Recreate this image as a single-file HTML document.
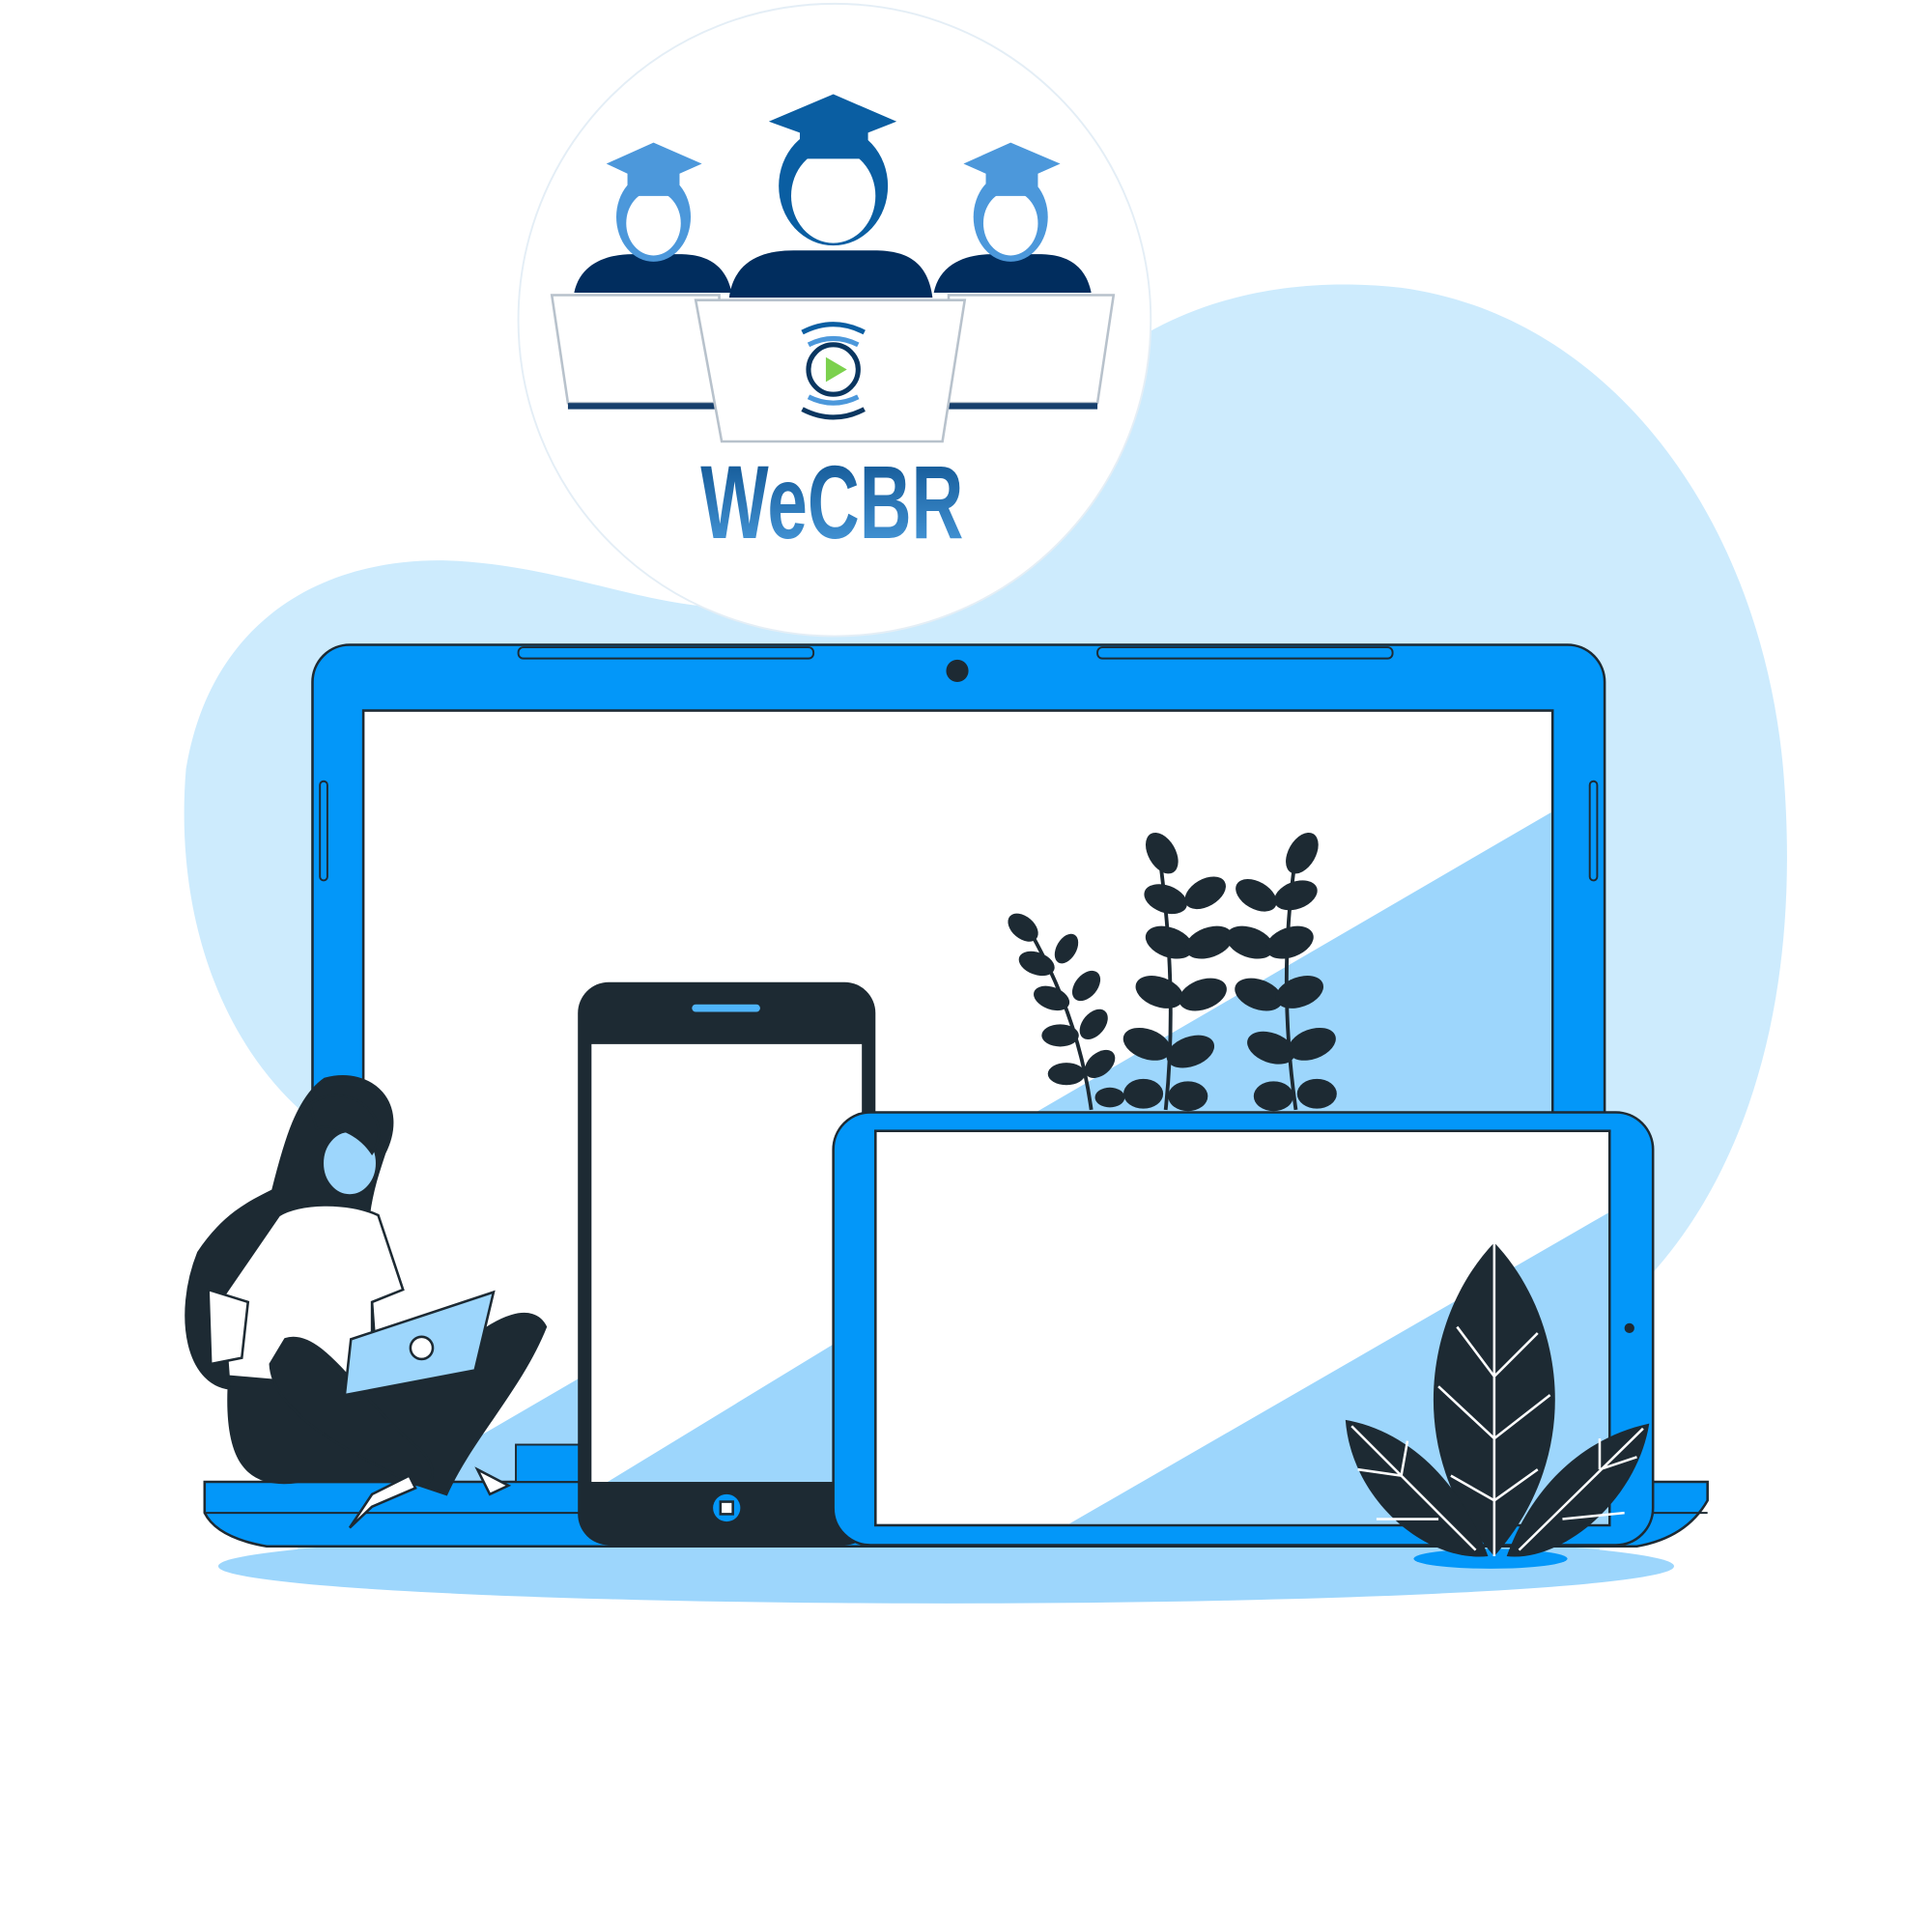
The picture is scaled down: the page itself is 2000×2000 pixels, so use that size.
<!DOCTYPE html>
<html><head><meta charset="utf-8"><style>html,body{margin:0;padding:0;background:#fff}svg{display:block}</style></head>
<body>
<svg width="2000" height="2000" viewBox="0 0 1558 1558" xmlns="http://www.w3.org/2000/svg">
<defs><linearGradient id="tg" x1="0" y1="0" x2="0" y2="1"><stop offset="0" stop-color="#0c4f8c"/><stop offset="1" stop-color="#4b9ee0"/></linearGradient></defs>
<rect width="1558" height="1558" fill="#fff"/>
<path d="M150,620 C170,500 260,450 360,452 C450,455 520,490 590,490 C700,490 780,420 880,300 C950,240 1040,222 1130,232 C1300,255 1420,420 1438,620 C1455,820 1400,960 1320,1040 L1290,1250 L240,1250 L260,910 C180,850 140,740 150,620 Z" fill="#cdebfd"/>
<circle cx="673" cy="258" r="255" fill="#fff" stroke="#e4eef6" stroke-width="1.5"/>
<g>
 <path d="M463,236 C468,212 490,205 510,205 L548,205 C568,205 585,212 590,236 Z" fill="#012d5e"/>
 <path d="M753,236 C758,212 780,205 800,205 L838,205 C858,205 875,212 880,236 Z" fill="#012d5e"/>
 <path d="M588,240 C592,210 615,202 640,202 L705,202 C730,202 748,210 752,240 Z" fill="#012d5e"/>
 <ellipse cx="527" cy="175" rx="30" ry="36" fill="#4c98db"/><ellipse cx="527" cy="180" rx="22" ry="26" fill="#fff"/>
 <path d="M489,132 L527,115 L566,132 L548,140 L548,158 L506,158 L506,140 Z" fill="#4c98db"/>
 <ellipse cx="815" cy="175" rx="30" ry="36" fill="#4c98db"/><ellipse cx="815" cy="180" rx="22" ry="26" fill="#fff"/>
 <path d="M777,132 L815,115 L855,132 L837,140 L837,158 L795,158 L795,140 Z" fill="#4c98db"/>
 <ellipse cx="672" cy="150" rx="44" ry="48" fill="#0a5ea2"/><ellipse cx="672" cy="158" rx="34" ry="38" fill="#fff"/>
 <path d="M620,98 L672,76 L723,98 L700,107 L700,128 L645,128 L645,107 Z" fill="#0a5ea2"/>
</g>
<path d="M445,238 L580,238 L580,325 L458,325 Z" fill="#fff" stroke="#b8c2cc" stroke-width="2"/>
<rect x="458" y="325" width="125" height="5" fill="#163f6c"/>
<path d="M765,238 L898,238 L885,325 L765,325 Z" fill="#fff" stroke="#b8c2cc" stroke-width="2"/>
<rect x="765" y="325" width="120" height="5" fill="#163f6c"/>
<path d="M561,242 L778,242 L760,356 L582,356 Z" fill="#fff" stroke="#b8c2cc" stroke-width="2"/>
<circle cx="672" cy="298" r="20" fill="none" stroke="#0a3660" stroke-width="4"/>
<path d="M666,288 L683,298 L666,308 Z" fill="#7bd14d"/>
<path d="M647,268 Q672,255 697,268" fill="none" stroke="#0a5ea2" stroke-width="4"/>
<path d="M652,278 Q672,268 692,278" fill="none" stroke="#4c98db" stroke-width="4"/>
<path d="M652,320 Q672,330 692,320" fill="none" stroke="#4c98db" stroke-width="4"/>
<path d="M647,330 Q672,343 697,330" fill="none" stroke="#0a3660" stroke-width="4"/>
<text x="671" y="434" text-anchor="middle" font-family="Liberation Sans Narrow, Liberation Sans, sans-serif" font-weight="bold" font-size="84" fill="url(#tg)" textLength="212" lengthAdjust="spacingAndGlyphs">WeCBR</text>
<ellipse cx="763" cy="1263" rx="587" ry="30" fill="#9dd6fc"/>
<rect x="252" y="520" width="1042" height="690" rx="30" fill="#0397f9" stroke="#1d2a33" stroke-width="2"/>
<rect x="418" y="522" width="238" height="9" rx="4" fill="#0397f9" stroke="#1d2a33" stroke-width="1.5"/>
<rect x="885" y="522" width="238" height="9" rx="4" fill="#0397f9" stroke="#1d2a33" stroke-width="1.5"/>
<circle cx="772" cy="541" r="9" fill="#1d2a33"/>
<rect x="258" y="630" width="6" height="80" rx="3" fill="none" stroke="#1d2a33" stroke-width="1.5"/>
<rect x="1282" y="630" width="6" height="80" rx="3" fill="none" stroke="#1d2a33" stroke-width="1.5"/>
<rect x="293" y="573" width="959" height="625" fill="#fff" stroke="#1d2a33" stroke-width="2"/>
<path d="M1251,655 L1251,1197 L320,1197 Z" fill="#9dd6fc"/>
<path d="M165,1195 L1377,1195 L1377,1210 Q1360,1240 1320,1247 L215,1247 Q175,1240 165,1220 Z" fill="#0397f9" stroke="#1d2a33" stroke-width="2"/>
<line x1="165" y1="1220" x2="1377" y2="1220" stroke="#1d2a33" stroke-width="1.5"/>
<rect x="416" y="1165" width="60" height="30" fill="#0397f9" stroke="#1d2a33" stroke-width="1.5"/>
<g fill="#1d2a33" stroke="#1d2a33">
 <path d="M880,895 Q870,820 830,750 M940,895 Q950,800 935,690 M1045,895 Q1030,790 1045,690" fill="none" stroke-width="3"/>
 <g stroke="none">
 <ellipse cx="825" cy="748" rx="14" ry="9" transform="rotate(40 825 748)"/><ellipse cx="860" cy="765" rx="13" ry="8" transform="rotate(-60 860 765)"/>
 <ellipse cx="836" cy="777" rx="15" ry="9" transform="rotate(20 836 777)"/><ellipse cx="876" cy="795" rx="14" ry="9" transform="rotate(-50 876 795)"/>
 <ellipse cx="848" cy="805" rx="15" ry="9" transform="rotate(20 848 805)"/><ellipse cx="882" cy="826" rx="14" ry="9" transform="rotate(-50 882 826)"/>
 <ellipse cx="855" cy="835" rx="15" ry="9"/><ellipse cx="887" cy="858" rx="14" ry="9" transform="rotate(-40 887 858)"/>
 <ellipse cx="860" cy="866" rx="15" ry="9"/><ellipse cx="895" cy="885" rx="12" ry="8"/>
 <ellipse cx="937" cy="688" rx="11" ry="18" transform="rotate(-30 937 688)"/><ellipse cx="1050" cy="688" rx="11" ry="18" transform="rotate(30 1050 688)"/>
 <ellipse cx="940" cy="725" rx="18" ry="11" transform="rotate(20 940 725)"/><ellipse cx="972" cy="720" rx="18" ry="11" transform="rotate(-30 972 720)"/>
 <ellipse cx="1013" cy="722" rx="18" ry="11" transform="rotate(30 1013 722)"/><ellipse cx="1045" cy="722" rx="18" ry="11" transform="rotate(-20 1045 722)"/>
 <ellipse cx="943" cy="760" rx="20" ry="12" transform="rotate(20 943 760)"/><ellipse cx="975" cy="760" rx="20" ry="12" transform="rotate(-20 975 760)"/>
 <ellipse cx="1008" cy="760" rx="20" ry="12" transform="rotate(20 1008 760)"/><ellipse cx="1040" cy="760" rx="20" ry="12" transform="rotate(-20 1040 760)"/>
 <ellipse cx="935" cy="800" rx="20" ry="12" transform="rotate(20 935 800)"/><ellipse cx="970" cy="802" rx="20" ry="12" transform="rotate(-20 970 802)"/>
 <ellipse cx="1015" cy="802" rx="20" ry="12" transform="rotate(20 1015 802)"/><ellipse cx="1048" cy="800" rx="20" ry="12" transform="rotate(-20 1048 800)"/>
 <ellipse cx="925" cy="842" rx="20" ry="12" transform="rotate(20 925 842)"/><ellipse cx="960" cy="848" rx="20" ry="12" transform="rotate(-20 960 848)"/>
 <ellipse cx="1025" cy="845" rx="20" ry="12" transform="rotate(20 1025 845)"/><ellipse cx="1058" cy="842" rx="20" ry="12" transform="rotate(-20 1058 842)"/>
 <ellipse cx="922" cy="882" rx="16" ry="12"/><ellipse cx="958" cy="884" rx="16" ry="12"/><ellipse cx="1027" cy="884" rx="16" ry="12"/><ellipse cx="1062" cy="882" rx="16" ry="12"/>
 </g>
</g>
<rect x="466" y="792" width="240" height="454" rx="25" fill="#1d2a33"/>
<rect x="477" y="842" width="218" height="353" fill="#fff"/>
<path d="M695,1070 L695,1195 L490,1195 Z" fill="#9dd6fc"/>
<rect x="558" y="810" width="55" height="6" rx="3" fill="#4fb4fa"/>
<circle cx="586" cy="1216" r="11" fill="#0397f9"/><rect x="580" y="1210" width="12" height="12" fill="#1d2a33"/><rect x="582" y="1212" width="8" height="8" fill="#fff"/>
<rect x="672" y="897" width="661" height="349" rx="30" fill="#0397f9" stroke="#1d2a33" stroke-width="2"/>
<rect x="706" y="912" width="592" height="318" fill="#fff" stroke="#1d2a33" stroke-width="2"/>
<path d="M1297,978 L1297,1229 L862,1229 Z" fill="#9dd6fc"/>
<circle cx="1314" cy="1071" r="4" fill="#1d2a33"/>
<ellipse cx="1202" cy="1257" rx="62" ry="8" fill="#0397f9"/>
<path d="M1205,1002 C1150,1060 1130,1170 1205,1255 C1280,1170 1260,1060 1205,1002 Z" fill="#1d2a33"/>
<path d="M1085,1145 C1090,1210 1150,1260 1200,1255 C1180,1200 1140,1155 1085,1145 Z" fill="#1d2a33"/>
<path d="M1330,1148 C1320,1210 1260,1260 1215,1255 C1235,1200 1275,1160 1330,1148 Z" fill="#1d2a33"/>
<g stroke="#fff" stroke-width="2" fill="none">
 <path d="M1205,1002 L1205,1255 M1205,1110 L1175,1070 M1205,1110 L1240,1075 M1205,1160 L1160,1118 M1205,1160 L1250,1125 M1205,1210 L1170,1190 M1205,1210 L1240,1185"/>
 <path d="M1090,1150 L1190,1250 M1130,1190 L1095,1185 M1160,1225 L1110,1225 M1130,1190 L1135,1162"/>
 <path d="M1325,1152 L1225,1250 M1290,1185 L1320,1175 M1260,1225 L1310,1220 M1290,1185 L1290,1160"/>
</g>
<g stroke="#1d2a33" stroke-width="2">
 <path d="M262,870 C300,860 330,890 310,930 C300,960 290,990 300,1050 L305,1120 L190,1120 C150,1120 140,1060 160,1010 C180,980 200,970 220,960 C230,920 240,885 262,870 Z" fill="#1d2a33"/>
 <path d="M225,980 C240,970 280,968 305,980 L325,1040 L300,1050 L300,1110 L185,1120 L180,1050 L170,1060 Z" fill="#fff"/>
 <path d="M168,1040 L200,1050 L195,1095 L170,1100 Z" fill="#fff"/>
 <ellipse cx="282" cy="938" rx="22" ry="26" fill="#9dd6fc"/>
 <path d="M250,890 C280,870 320,900 300,930 C290,915 270,905 255,910 Z" fill="#1d2a33"/>
 <path d="M185,1110 C180,1180 200,1200 240,1195 L330,1195 L360,1205 C380,1160 420,1120 440,1070 C430,1050 400,1060 370,1090 L300,1120 Z" fill="#1d2a33"/>
 <path d="M230,1080 C260,1070 290,1130 340,1170 C355,1185 350,1205 330,1195 C280,1170 220,1140 218,1100 Z" fill="#1d2a33"/>
 <path d="M283,1080 L398,1042 L383,1105 L278,1125 Z" fill="#9dd6fc"/>
 <circle cx="340" cy="1087" r="9" fill="#fff"/>
 <path d="M330,1190 L300,1205 L282,1232 L300,1215 L335,1200 Z M385,1185 L410,1198 L395,1205 Z" fill="#fff"/>
</g>
</svg>
</body></html>
